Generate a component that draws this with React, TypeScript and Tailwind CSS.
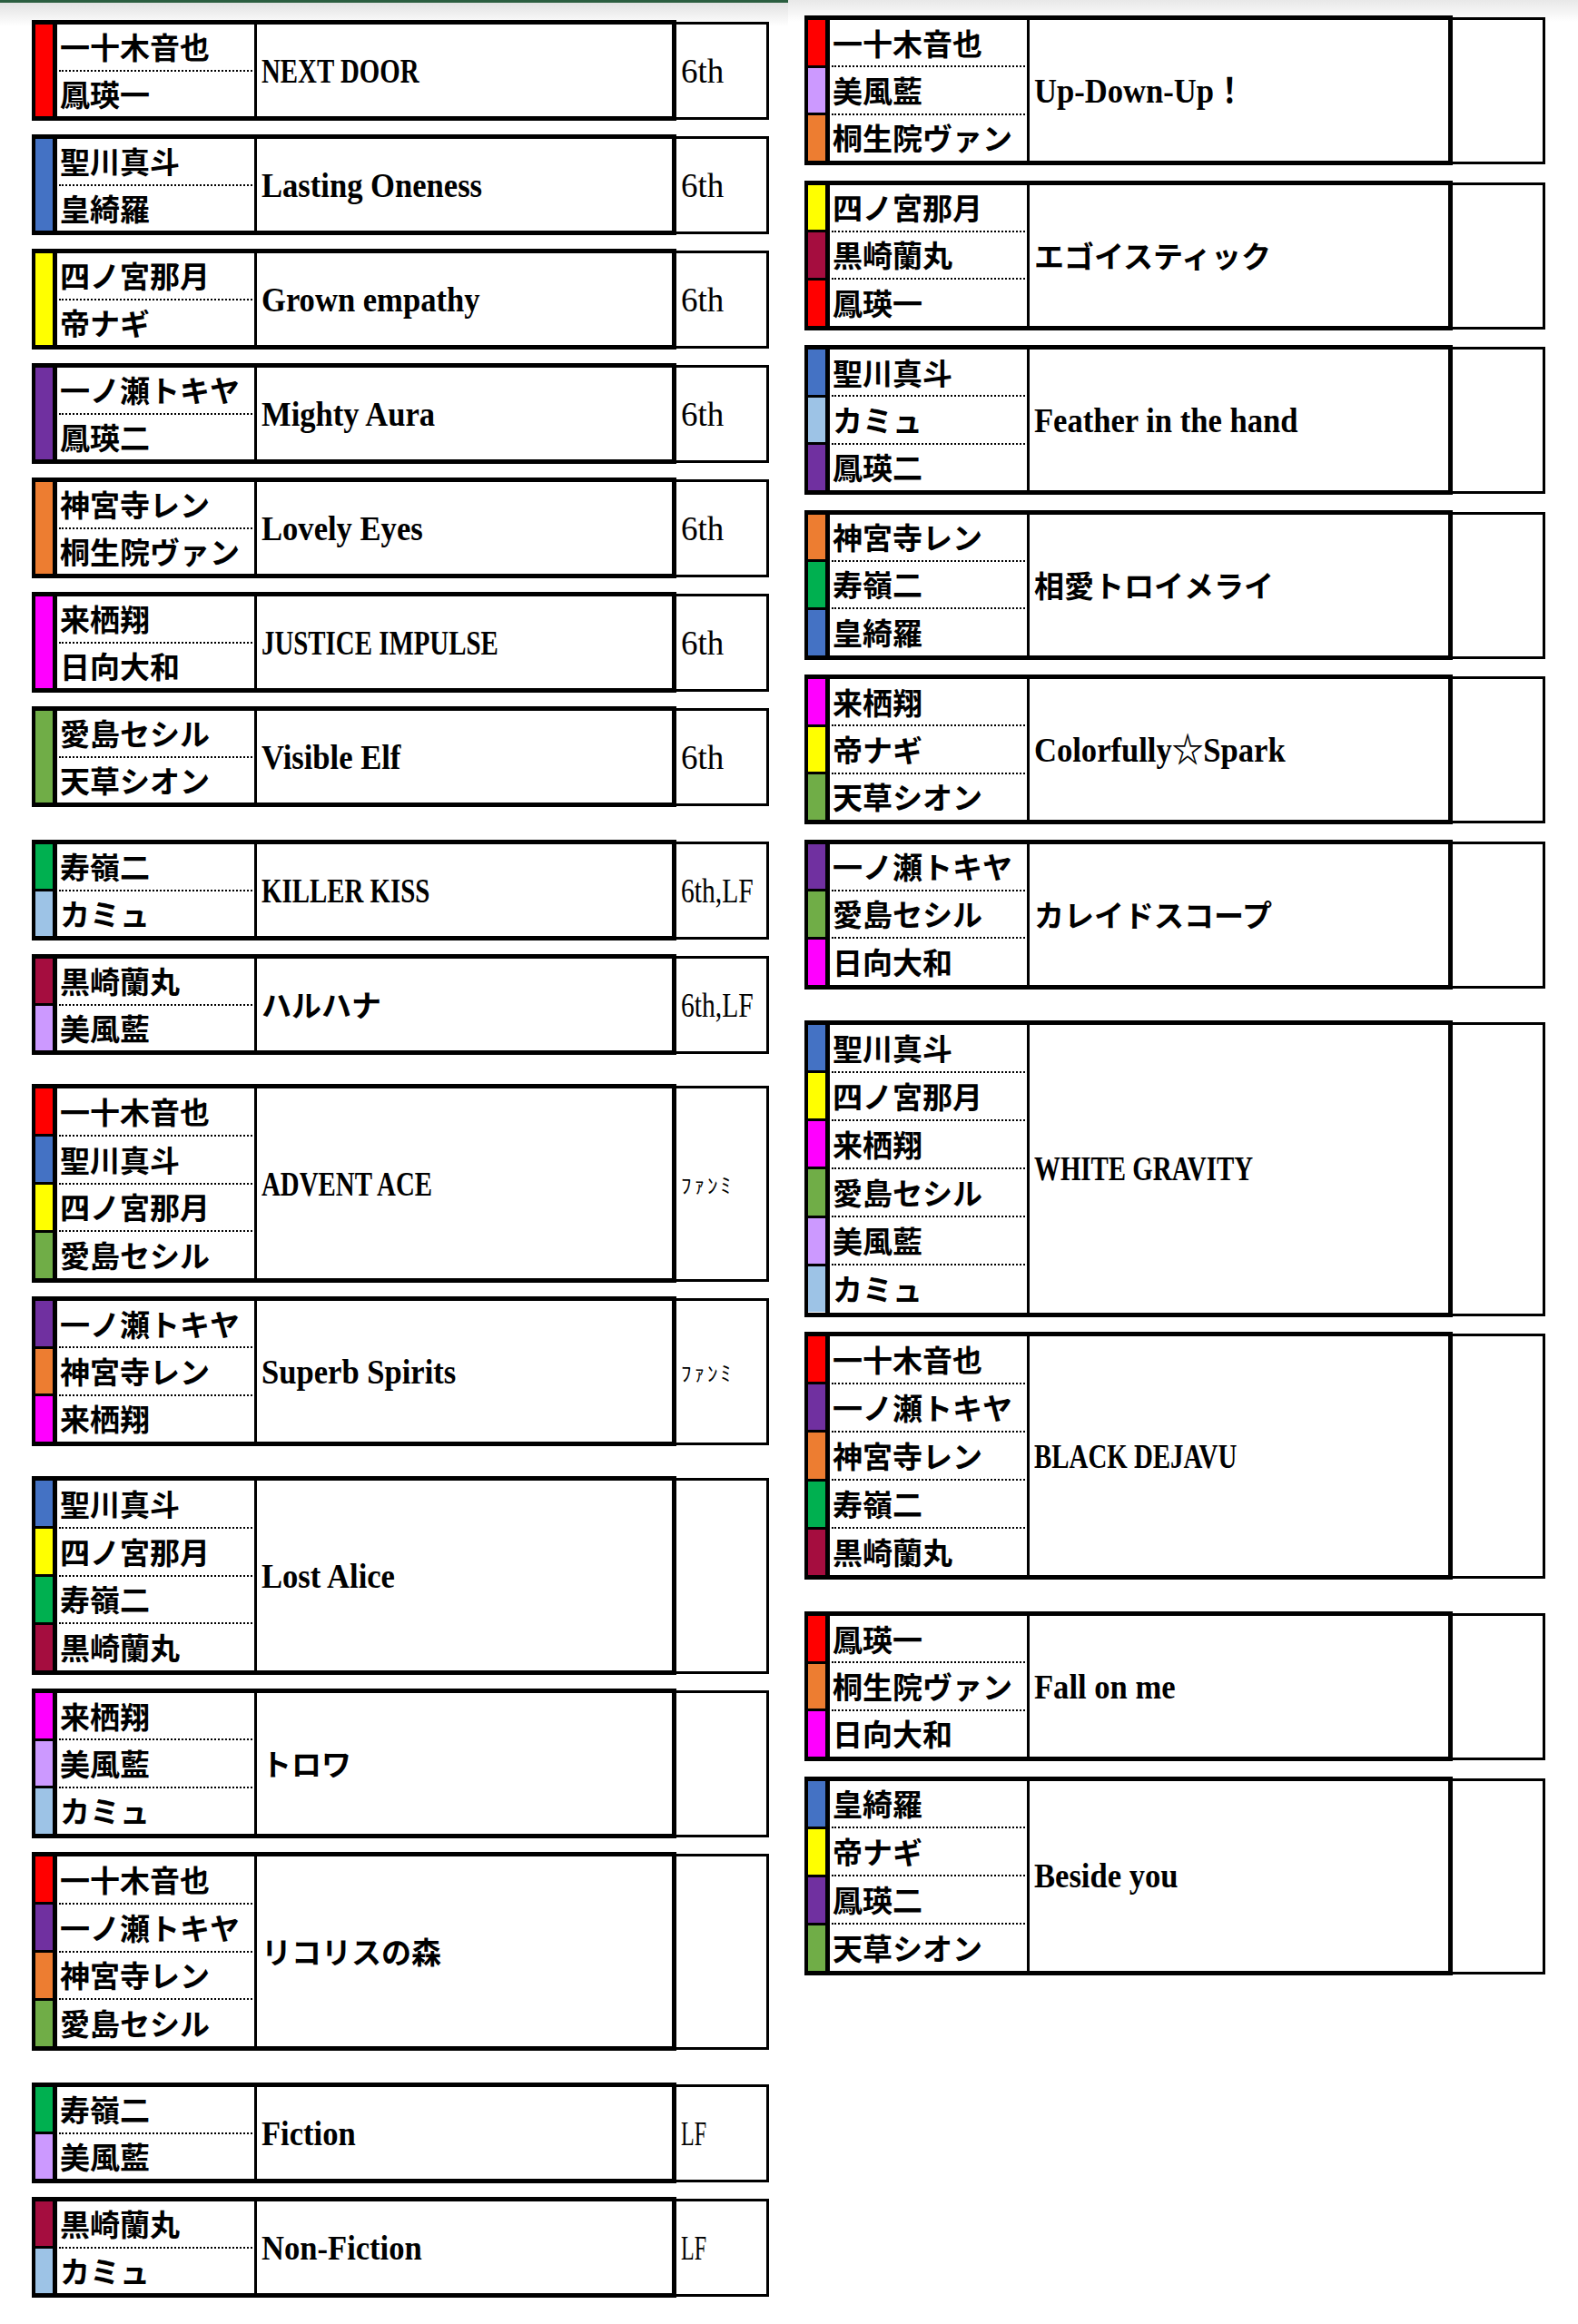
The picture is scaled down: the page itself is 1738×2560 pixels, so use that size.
const COLOR: Record<string, string> = {
  一十木音也: "bg-[#ff0000]",
  鳳瑛一: "bg-[#ff0000]",
  聖川真斗: "bg-[#4472c4]",
  皇綺羅: "bg-[#4472c4]",
  四ノ宮那月: "bg-[#ffff00]",
  帝ナギ: "bg-[#ffff00]",
  一ノ瀬トキヤ: "bg-[#7030a0]",
  鳳瑛二: "bg-[#7030a0]",
  神宮寺レン: "bg-[#ed7d31]",
  桐生院ヴァン: "bg-[#ed7d31]",
  来栖翔: "bg-[#ff00ff]",
  日向大和: "bg-[#ff00ff]",
  愛島セシル: "bg-[#70ad47]",
  天草シオン: "bg-[#70ad47]",
  寿嶺二: "bg-[#00b050]",
  カミュ: "bg-[#9dc3e6]",
  黒崎蘭丸: "bg-[#a50d3f]",
  美風藍: "bg-[#cc99ff]",
};

// box height by member count
const HEIGHT: Record<number, string> = {
  2: "h-[111px]",
  3: "h-[165px]",
  4: "h-[219px]",
  5: "h-[273px]",
  6: "h-[327px]",
};

type Song = {
  names: string[];
  title: string;
  kind: "caps" | "latin" | "jp";
  note?: "6th" | "6th,LF" | "LF" | "fan";
};

type Group = { gap: string; songs: Song[] };

const LEFT: Group[] = [
  {
    gap: "mt-0",
    songs: [
      { names: ["一十木音也", "鳳瑛一"], title: "NEXT DOOR", kind: "caps", note: "6th" },
      { names: ["聖川真斗", "皇綺羅"], title: "Lasting Oneness", kind: "latin", note: "6th" },
      { names: ["四ノ宮那月", "帝ナギ"], title: "Grown empathy", kind: "latin", note: "6th" },
      { names: ["一ノ瀬トキヤ", "鳳瑛二"], title: "Mighty Aura", kind: "latin", note: "6th" },
      { names: ["神宮寺レン", "桐生院ヴァン"], title: "Lovely Eyes", kind: "latin", note: "6th" },
      { names: ["来栖翔", "日向大和"], title: "JUSTICE IMPULSE", kind: "caps", note: "6th" },
      { names: ["愛島セシル", "天草シオン"], title: "Visible Elf", kind: "latin", note: "6th" },
    ],
  },
  {
    gap: "mt-[36px]",
    songs: [
      { names: ["寿嶺二", "カミュ"], title: "KILLER KISS", kind: "caps", note: "6th,LF" },
      { names: ["黒崎蘭丸", "美風藍"], title: "ハルハナ", kind: "jp", note: "6th,LF" },
    ],
  },
  {
    gap: "mt-[32px]",
    songs: [
      { names: ["一十木音也", "聖川真斗", "四ノ宮那月", "愛島セシル"], title: "ADVENT ACE", kind: "caps", note: "fan" },
      { names: ["一ノ瀬トキヤ", "神宮寺レン", "来栖翔"], title: "Superb Spirits", kind: "latin", note: "fan" },
    ],
  },
  {
    gap: "mt-[33px]",
    songs: [
      { names: ["聖川真斗", "四ノ宮那月", "寿嶺二", "黒崎蘭丸"], title: "Lost Alice", kind: "latin" },
      { names: ["来栖翔", "美風藍", "カミュ"], title: "トロワ", kind: "jp" },
      { names: ["一十木音也", "一ノ瀬トキヤ", "神宮寺レン", "愛島セシル"], title: "リコリスの森", kind: "jp" },
    ],
  },
  {
    gap: "mt-[35px]",
    songs: [
      { names: ["寿嶺二", "美風藍"], title: "Fiction", kind: "latin", note: "LF" },
      { names: ["黒崎蘭丸", "カミュ"], title: "Non-Fiction", kind: "latin", note: "LF" },
    ],
  },
];

const RIGHT: Group[] = [
  {
    gap: "mt-0",
    songs: [
      { names: ["一十木音也", "美風藍", "桐生院ヴァン"], title: "Up-Down-Up！", kind: "latin" },
      { names: ["四ノ宮那月", "黒崎蘭丸", "鳳瑛一"], title: "エゴイスティック", kind: "jp" },
      { names: ["聖川真斗", "カミュ", "鳳瑛二"], title: "Feather in the hand", kind: "latin" },
      { names: ["神宮寺レン", "寿嶺二", "皇綺羅"], title: "相愛トロイメライ", kind: "jp" },
      { names: ["来栖翔", "帝ナギ", "天草シオン"], title: "Colorfully☆Spark", kind: "latin" },
      { names: ["一ノ瀬トキヤ", "愛島セシル", "日向大和"], title: "カレイドスコープ", kind: "jp" },
    ],
  },
  {
    gap: "mt-[34px]",
    songs: [
      { names: ["聖川真斗", "四ノ宮那月", "来栖翔", "愛島セシル", "美風藍", "カミュ"], title: "WHITE GRAVITY", kind: "caps" },
      { names: ["一十木音也", "一ノ瀬トキヤ", "神宮寺レン", "寿嶺二", "黒崎蘭丸"], title: "BLACK DEJAVU", kind: "caps" },
    ],
  },
  {
    gap: "mt-[35px]",
    songs: [
      { names: ["鳳瑛一", "桐生院ヴァン", "日向大和"], title: "Fall on me", kind: "latin" },
      { names: ["皇綺羅", "帝ナギ", "鳳瑛二", "天草シオン"], title: "Beside you", kind: "latin" },
    ],
  },
];

function Title({ song }: { song: Song }) {
  if (song.kind === "jp") {
    return (
      <span className="whitespace-nowrap font-['Noto_Sans_CJK_JP',sans-serif] text-[33px] font-bold leading-none">
        {song.title}
      </span>
    );
  }
  return (
    <span
      className={`inline-block origin-left whitespace-nowrap font-['Liberation_Serif','Noto_Sans_CJK_JP',serif] text-[38px] font-bold leading-none ${
        song.kind === "caps" ? "scale-x-[0.76]" : "scale-x-[0.91]"
      }`}
    >
      {song.title}
    </span>
  );
}

function Note({ note }: { note?: Song["note"] }) {
  if (!note) return null;
  if (note === "fan") {
    return (
      <span className="whitespace-nowrap font-['Noto_Sans_CJK_JP',sans-serif] text-[23px] leading-none tracking-[3px]">
        ﾌｧﾝﾐ
      </span>
    );
  }
  const squeeze =
    note === "6th" ? "scale-x-100" : note === "LF" ? "scale-x-[0.65]" : "scale-x-[0.8]";
  return (
    <span
      className={`inline-block origin-left whitespace-nowrap font-['Liberation_Serif',serif] text-[37px] leading-none ${squeeze}`}
    >
      {note}
    </span>
  );
}

function SongBox({ song }: { song: Song }) {
  return (
    <div className={`flex ${HEIGHT[song.names.length]}`}>
      <div className="flex flex-1 border-y-[5px] border-l-[4px] border-r-[5px] border-black bg-white">
        <div className="flex w-[24px] flex-col border-r-[5px] border-black">
          {song.names.map((n, i) => (
            <div
              key={i}
              className={`flex-1 ${COLOR[n]} ${
                i > 0 && COLOR[song.names[i - 1]] !== COLOR[n] ? "border-t-[3px] border-black" : ""
              }`}
            />
          ))}
        </div>
        <div className="flex w-[220px] flex-col border-r-[3px] border-black">
          {song.names.map((n, i) => (
            <div
              key={i}
              className={`mx-[2px] flex flex-1 items-center pl-[1px] ${
                i < song.names.length - 1 ? "border-b-2 border-dotted border-black" : ""
              }`}
            >
              <span className="whitespace-nowrap font-['Noto_Sans_CJK_JP',sans-serif] text-[33px] font-bold leading-none text-black">
                {n}
              </span>
            </div>
          ))}
        </div>
        <div className="flex flex-1 items-center pl-[5px] text-black">
          <Title song={song} />
        </div>
      </div>
      <div className="mb-[1px] mt-[2px] flex w-[102px] items-center border-y-[3px] border-r-[3px] border-black bg-white pl-[5px] text-black">
        <Note note={song.note} />
      </div>
    </div>
  );
}

function Column({ groups, gap, className }: { groups: Group[]; gap: string; className: string }) {
  return (
    <div className={className}>
      {groups.map((g, gi) => (
        <div key={gi} className={`flex flex-col ${gap} ${g.gap}`}>
          {g.songs.map((s, si) => (
            <SongBox key={si} song={s} />
          ))}
        </div>
      ))}
    </div>
  );
}

export default function App() {
  return (
    <div className="flex min-h-[2560px] w-[1738px] bg-white">
      <div className="w-[868px] border-t-[3px] border-[#2b5e40] bg-[linear-gradient(to_bottom,#e2e2e2,#ffffff_26px)] bg-no-repeat pt-[19px]">
        <Column groups={LEFT} gap="gap-[15px]" className="w-[847px] pl-[35px]" />
      </div>
      <div className="flex-1 bg-[linear-gradient(to_bottom,#e8e8e8,#ffffff_24px)] bg-no-repeat pt-[17px]">
        <Column groups={RIGHT} gap="gap-[16.5px]" className="w-[834px] pl-[18px]" />
      </div>
    </div>
  );
}
